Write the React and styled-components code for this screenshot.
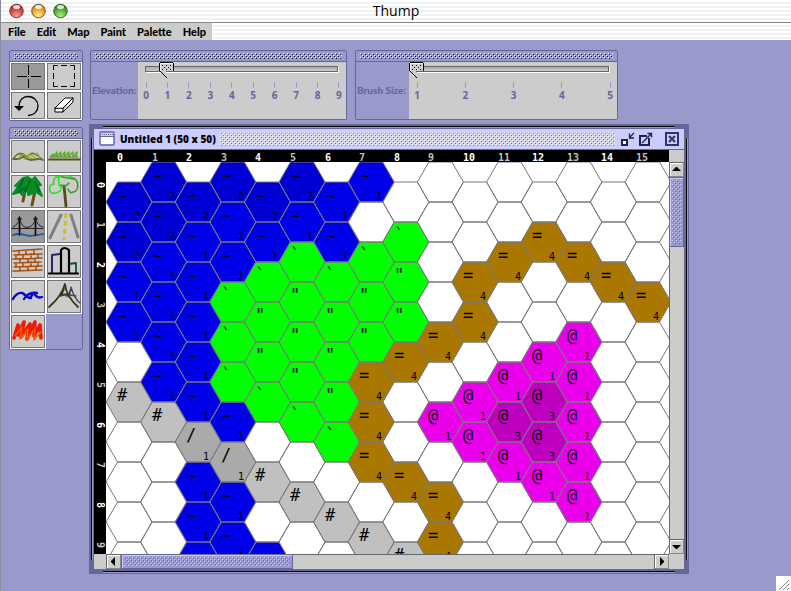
import React, { useState } from "react";
import styled, { createGlobalStyle, css } from "styled-components";

const lavender = "#9999cc";
const slate = "#666699";
const pale = "#ccccff";
const silver = "#cccccc";

const svgUrl = (w, h, body) =>
  `url("data:image/svg+xml,${encodeURIComponent(
    `<svg xmlns="http://www.w3.org/2000/svg" width="${w}" height="${h}" shape-rendering="crispEdges">${body}</svg>`
  )}")`;

const bumps = (light, dark) =>
  svgUrl(
    4,
    4,
    `<path fill="${light}" d="M0 0h1v1h-1zM2 2h1v1h-1z"/><path fill="${dark}" d="M1 1h1v1h-1zM3 3h1v1h-1z"/>`
  );

const thumbImage = svgUrl(
  15,
  16,
  `<path fill="#ccc" d="M1 1h13v8h-7v6l-6-6z"/><path fill="#fff" d="M1 1h13v1h-12v7h-1z"/>` +
    `<path fill="#000" d="M1 0h13v1h-13zM0 1h1v8h-1zM14 1h1v8h-1zM1 9h1v1h-1zM2 10h1v1h-1zM3 11h1v1h-1zM4 12h1v1h-1zM5 13h1v1h-1zM6 14h1v1h-1zM7 15h1v1h-1z"/>` +
    `<path fill="#000" d="M3 3h1v1h-1zM7 3h1v1h-1zM11 3h1v1h-1zM5 5h1v1h-1zM9 5h1v1h-1zM3 7h1v1h-1zM7 7h1v1h-1zM11 7h1v1h-1z"/>`
);

const Global = createGlobalStyle`
  * { box-sizing: border-box; }
  body { margin: 0; background: ${lavender}; font-family: "Open Sans", "Noto Sans", sans-serif; }
  button { padding: 0; border: 0; background: none; font: inherit; }
`;

const Screen = styled.div`
  min-height: 100vh;
  display: flex;
  flex-direction: column;
  position: relative;
  overflow: hidden;
  background: ${lavender};
  border-left: 1px solid #8a8a9a;
`;

const stripes = css`
  background: repeating-linear-gradient(#ffffff 0 2px, #f2f2f2 2px 4px);
`;

const TitleBar = styled.header`
  ${stripes}
  height: 23px;
  border-bottom: 1px solid #888;
  display: grid;
  grid-template-columns: 1fr auto 1fr;
  align-items: center;
`;

const Lights = styled.div`
  display: flex;
  gap: 7px;
  padding-left: 8px;
`;

const LightButton = styled.button`
  width: 15px;
  height: 16px;
  svg { display: block; }
`;

const AppTitle = styled.h1`
  margin: 0;
  font: 400 14px/22px "Open Sans", sans-serif;
  color: #000;
`;

const MenuStrip = styled.div`
  ${stripes}
  height: 17px;
  display: flex;
`;

const MenuBar = styled.nav`
  display: flex;
  gap: 11px;
  padding: 0 6px 0 7px;
  background: ${silver};
`;

const MenuItem = styled.button`
  font-family: Lato, sans-serif;
  font-size: 11px;
  line-height: 16px;
  font-weight: 900;
  color: #000;
`;

const Desktop = styled.main`
  flex: 1;
  display: grid;
  grid-template-columns: 74px 1fr;
  padding: 10px 102px 17px 8px;
  column-gap: 6px;
`;

const Sidebar = styled.aside`
  display: flex;
  flex-direction: column;
  gap: 6px;
`;

const Panel = styled.section`
  border: 1px solid ${slate};
  border-radius: 2px;
  flex: ${(p) => (p.$basis ? `0 1 ${p.$basis}px` : "none")};
  min-width: 0;
`;

const Grip = styled.div`
  height: 11px;
  border-bottom: 1px solid ${slate};
  padding: 2px 4px;
  &::before {
    content: "";
    display: block;
    height: 6px;
    background: ${bumps("#ffffff", "#111133")};
  }
`;

const ToolGrid = styled.div`
  display: grid;
  grid-template-columns: 36px 36px;
  grid-auto-rows: ${(p) => p.$row}px;
`;

const ToolButton = styled.button`
  background: ${(p) => (p.$on ? "#999999" : silver)};
  box-shadow: inset 1px 1px #fff, inset -1px -1px #fff, inset 2px 2px #777, inset -2px -2px #777;
  svg { display: block; }
`;

const Work = styled.div`
  display: flex;
  flex-direction: column;
  gap: 4px;
  min-width: 0;
`;

const ToolbarRow = styled.div`
  display: flex;
  gap: 8px;
  padding-left: 1px;
`;

const SliderRow = styled.div`
  display: flex;
  height: 57px;
`;

const SliderLabel = styled.label`
  width: ${(p) => p.$w}px;
  padding-left: 1px;
  font-family: Lato, sans-serif;
  font-size: 10px;
  line-height: 57px;
  font-weight: 900;
  color: ${slate};
  white-space: nowrap;
`;

const SliderBody = styled.div`
  flex: 1;
  background: ${silver};
`;

const Range = styled.input`
  appearance: none;
  display: block;
  width: 100%;
  height: 16px;
  margin: 0;
  background:
    linear-gradient(#aaaaaa, ${silver}) 8px 5px / calc(100% - 17px) 4px no-repeat,
    linear-gradient(#666, #666) 7px 4px / calc(100% - 15px) 6px no-repeat,
    linear-gradient(#fff, #fff) 8px 5px / calc(100% - 15px) 6px no-repeat;
  &::-webkit-slider-thumb {
    appearance: none;
    width: 15px;
    height: 16px;
    background: ${thumbImage};
  }
`;

const Scale = styled.div`
  display: flex;
  justify-content: space-between;
  padding: 4px 1px 0 2px;
`;

const Mark = styled.span`
  width: 12px;
  font-size: 10px;
  line-height: 14px;
  font-weight: 700;
  text-align: center;
  color: ${slate};
  &::before {
    content: "";
    display: block;
    width: 1px;
    height: 6px;
    margin: 0 auto;
    background: ${lavender};
  }
`;

const Frame = styled.section`
  flex: 1;
  position: relative;
  display: flex;
  flex-direction: column;
  border: 5px solid ${slate};
  border-radius: 1px;
`;

const Edge = styled.i`
  position: absolute;
  ${(p) =>
    p.$vertical
      ? css`width: 2px; top: 9px; bottom: 9px; border-left: 1px solid #000; border-right: 1px solid ${lavender};`
      : css`height: 2px; left: 9px; right: 9px; border-top: 1px solid #000; border-bottom: 1px solid ${lavender};`}
  ${(p) => p.$side}: ${(p) => p.$at}px;
`;

const FrameTitle = styled.div`
  height: 21px;
  display: flex;
  align-items: center;
  padding: 0 5px;
  background: ${pale};
  border-bottom: 1px solid ${slate};
  svg { display: block; }
`;

const FrameName = styled.h2`
  margin: 0 4px 0 5px;
  font-size: 10px;
  line-height: 20px;
  font-weight: 800;
  white-space: nowrap;
`;

const TitleBumps = styled.div`
  flex: 1;
  height: 14px;
  background: ${bumps("#ffffff", "#7777aa")};
`;

const FrameButtons = styled.div`
  display: flex;
  gap: 4px;
  margin-left: 6px;
  button:last-child { margin-left: 8px; }
`;

const Viewer = styled.div`
  flex: 1;
  display: grid;
  grid-template-columns: 12px 1fr 15px;
  grid-template-rows: 12px 1fr 15px;
  background: ${silver};
`;

const MapPane = styled.div`
  grid-area: 1 / 1 / 3 / 3;
  min-height: 404px;
  overflow: hidden;
  svg { display: block; width: 100%; height: 100%; }
`;

const ScrollBar = styled.div`
  grid-area: ${(p) => (p.$vertical ? "2 / 3" : "3 / 2")};
  display: flex;
  flex-direction: ${(p) => (p.$vertical ? "column" : "row")};
  background: ${silver};
  box-shadow: inset ${(p) => (p.$vertical ? "1px 0" : "0 1px")} #666;
`;

const ArrowButton = styled.button`
  flex: none;
  width: 15px;
  height: 15px;
  background: ${silver};
  box-shadow: inset 1px 1px #666, inset -1px -1px #888, inset 2px 2px #fff;
  svg { display: block; }
`;

const Thumb = styled.div`
  flex: 0 0 ${(p) => p.$size}px;
  padding: 3px;
  background: ${lavender};
  box-shadow: inset 0 0 0 1px ${slate}, inset 2px 2px ${pale};
  &::before {
    content: "";
    display: block;
    height: 100%;
    background: ${bumps(pale, slate)};
  }
`;

const Spacer = styled.div`
  flex: 1;
`;

const SizeHandle = styled.div`
  position: absolute;
  right: 0;
  bottom: 0;
  svg { display: block; }
`;

const Glyph = styled.text`
  font-size: 17px;
`;

const WaterGlyph = styled.text`
  font-family: "Noto Sans", sans-serif;
  font-size: 18px;
`;

/* Terrain code: symbol, fill, elevation */
const terrain = {
  w: ["~", "#0000e9", "1"],
  W: ["~", "#0000d4", "2"],
  g: ["`", "#00ff00", ""],
  G: ['"', "#00ff00", ""],
  r: ["=", "#aa7700", "4"],
  p: ["#", "#c0c0c0", ""],
  b: ["/", "#aaaaaa", "1"],
  m: ["@", "#ea00ea", "1"],
  M: ["@", "#c000c0", "3"],
};

const columns = [
  "WWww.p....",
  "WWwwwwp...",
  "Wwwwwwbwww",
  "Wwwgggwbww",
  "WwgGGg.p.w",
  "WwgGGGg.p.",
  "wwgGGGg.p.",
  "w.gGGrrr.p",
  ".gGGr..r.p",
  "....r.m.rr",
  "..rr.mm...",
  "..r..mMm..",
  ".r..mMMm..",
  "..r.mmmmm.",
  "..r.......",
  "...r......",
];

const HEX_STEP = 34.6;
const hexPath = (cx, top) =>
  `M${cx - 23} ${top + 20}L${cx - 11.5} ${top}H${cx + 11.5}L${cx + 23} ${top + 20}L${cx + 11.5} ${top + 40}H${cx - 11.5}Z`;

function HexMap() {
  const cells = columns.flatMap((col, c) =>
    [...col].map((code, r) => ({
      key: `${c}-${r}`,
      cx: 35 + c * HEX_STEP,
      top: (c % 2 ? 12 : 32) + r * 40,
      kind: terrain[code],
    }))
  );
  const filled = cells.filter((h) => h.kind);
  return (
    <svg role="img" aria-label="Hex map" fontFamily='"DejaVu Sans Mono", monospace'>
      <rect width="100%" height="100%" fill="#000" />
      <svg x="12" y="12" width="100%" height="100%">
        <rect width="100%" height="100%" fill="#fff" />
        <g transform="translate(-12 -12)">
          {filled.map((h) => (
            <path key={h.key} d={hexPath(h.cx, h.top)} fill={h.kind[1]} />
          ))}
          {cells.map((h) => (
            <path key={h.key} d={hexPath(h.cx, h.top)} fill="none" stroke="#787878" />
          ))}
          {filled.map((h) => (
            <g key={h.key}>
              {h.kind[0] === "~" ? (
                <WaterGlyph x={Math.round(h.cx - 12)} y={h.top + 21}>~</WaterGlyph>
              ) : (
                <Glyph x={Math.round(h.cx - 12)} y={h.top + 19}>{h.kind[0]}</Glyph>
              )}
              {h.kind[2] && <text x={Math.round(h.cx + 5)} y={h.top + 38} fontSize="10">{h.kind[2]}</text>}
            </g>
          ))}
        </g>
      </svg>
      <g fontSize="10" fontWeight="700">
        {columns.map((_, c) => (
          <text key={c} x={Math.round(23 + c * HEX_STEP)} y="11" fill={c % 2 ? "#c0c0c0" : "#fff"}>{c}</text>
        ))}
        {[0, 1, 2, 3, 4, 5, 6, 7, 8, 9].map((r) => (
          <text key={r} transform={`translate(3 ${32 + r * 40}) rotate(90)`} fill={r % 2 ? "#c0c0c0" : "#fff"}>{r}</text>
        ))}
      </g>
    </svg>
  );
}

const Icon = ({ h = 35, children }) => (
  <svg width="36" height={h} viewBox={`0 0 36 ${h}`} fill="none" strokeLinecap="round" strokeLinejoin="round">
    {children}
  </svg>
);

const editTools = [
  ["Crosshair", <path d="M7 14.5h10M21 14.5h10M18.5 3v10M18.5 17v9M18 14.5h1" stroke="#000" strokeLinecap="butt" />],
  ["Select", <path d="M7.5 8V3.5H12M15 3.5h6M24 3.5h4.5V8M28.5 11v6M28.5 20v4.5H24M21 24.5h-6M12 24.5H7.5V20M7.5 17v-6" stroke="#000" strokeLinecap="butt" strokeLinejoin="miter" />],
  ["Undo", <><path d="M9 15C9 9 13 5.5 18 5.5C24 5.5 28 10 28 15C28 20 24 24.5 18.5 24.5" stroke="#000" strokeWidth="1.3" /><path d="M4 15h10l-5 5z" fill="#000" /></>],
  ["Eraser", <path d="M9 17L19 7L27 7L17 17ZM9 17V21H17V17M17 21L27 11V7" fill="#fff" stroke="#000" />],
];

const terrainTools = [
  ["Rough", <><path d="M3 20h6l4-2 7 3 9-1 4 1" stroke="#665d50" strokeWidth="1.8" /><path d="M4 19Q8 13 12 15L16 20Q20 12 25 15L32 20M8 15Q13 13 17 18" stroke="#6c6a24" strokeWidth="1.4" /><path d="M8 20Q12 13 17 17T25 19M15 20Q20 12 25 19M27 14l3 5" stroke="#8fae1c" strokeWidth="1.4" /></>],
  ["Grass", <><path d="M5 18h27M4 18l3-3v3l4-5-1 5 5-5-1 5 5-5-1 5 5-5-1 5 5-5 0 5 4-5-1 5" stroke="#5da832" strokeWidth="1.4" /><path d="M3 20.5h31" stroke="#5b5020" strokeWidth="1.8" /></>],
  ["Woods", <><path d="M15 17L13 27M25 17L22 31" stroke="#6a4e16" strokeWidth="3" /><path d="M13 4L5 12l4-1-6 9 7-2 2 3 6-5 0 5 8-3 6 4-4-10 3-1-6-8-3 3-4-3z" fill="#078c28" stroke="#078c28" strokeWidth="2" /><path d="M13 6l-4 8M20 7l-5 10M25 8l4 9M9 18l5-4" stroke="#006c25" strokeWidth="2" /></>],
  ["Jungle", <><path d="M18 12L20 32" stroke="#584a1c" strokeWidth="2.8" /><path d="M12 3C8 2 7 8 8 10C3 10 2 17 6 19C10 20 13 18 15 16M12 3C18 1 24 1 26 4M13 3C12 8 12 11 15 14" stroke="#25e018" strokeWidth="1.5" /><path d="M26 4C34 5 33 18 27 18C24 20 23 17 22 15M15 11q4 3 8-2M16 3l12 2" stroke="#3a9b20" strokeWidth="1.6" /></>],
  ["Bridge", <><path d="M3 26q6-2 12 0t18-1" stroke="#1554a8" strokeWidth="1.8" /><path d="M9.5 8v18M25.5 8v18M8 10h3M24 10h3" stroke="#000" strokeWidth="1.6" /><path d="M2 19.5h31M3 18Q8 16 9.5 9Q11 18 17 18.5Q24 18 25.5 9Q27 17 33 18" stroke="#222" /></>],
  ["Road", <><path d="M15 6L4 29M25 6L32 28" stroke="#808080" strokeWidth="3" /><path d="M20 4L18 31" stroke="#cbc021" strokeWidth="3" strokeDasharray="5 3" strokeLinecap="butt" /></>],
  ["Rubble", <path d="M3 7l14-1 15-1M4 11l28-1M3 15l29-1M4 19l27-1M4 23l28-1M3 27l29-1M9 7v4M16 7v3M24 6v4M6 11v4M13 11v3M21 10v4M28 10v4M10 15v4M18 15v3M25 14v4M6 19v4M13 19v3M21 18v4M28 18v4M10 23v4M18 23v3M26 22v4" stroke="#a65012" strokeWidth="1.5" />],
  ["Building", <><path d="M6 29V11l8-1" stroke="#24246c" strokeWidth="2" /><path d="M23 20l7-1v10" stroke="#16502e" strokeWidth="1.8" /><path d="M3 29.5h29M15 29V6Q18 2 23 6V29" stroke="#000" strokeWidth="2.2" /></>],
  ["Water", <path d="M3 20Q7 13 12 14C15 15 17 19 21 19Q21 14 27 14C22 13 17 15 14 20M24 14Q27 20 32 18" stroke="#0909c4" strokeWidth="2.4" />],
  ["Mountain", <><path d="M20 17Q25 16 25 8Q28 19 34 24M25 9L22 18M24 16l6 1" stroke="#42454b" strokeWidth="1.3" /><path d="M3 28Q15 18 19 5Q20 17 32 28M18 10l-3 7M16 16l7-1" stroke="#39371e" strokeWidth="1.8" /></>],
  ["Fire", <><path d="M4 24L8 11 8 21 14 8 11 23 20 10 17 25 25 8 24 22 30 11 31 24" stroke="#f01806" strokeWidth="3.6" /><path d="M5 22l7-9-2 12 8-10-1 10 8-10-1 11 7-8" stroke="#f85a00" strokeWidth="1.5" /></>],
];

function Tools({ items, row, initial, label }) {
  const [active, setActive] = useState(initial);
  return (
    <Panel aria-label={label}>
      <Grip />
      <ToolGrid $row={row}>
        {items.map(([name, art]) => (
          <ToolButton key={name} aria-label={name} $on={name === active} onClick={() => setActive(name)}>
            <Icon h={row}>{art}</Icon>
          </ToolButton>
        ))}
      </ToolGrid>
    </Panel>
  );
}

function SliderPanel({ id, label, labelWidth, basis, min, max, initial }) {
  const marks = Array.from({ length: max - min + 1 }, (_, i) => min + i);
  return (
    <Panel $basis={basis}>
      <Grip />
      <SliderRow>
        <SliderLabel htmlFor={id} $w={labelWidth}>{label}</SliderLabel>
        <SliderBody>
          <Range id={id} type="range" min={min} max={max} defaultValue={initial} />
          <Scale>
            {marks.map((m) => <Mark key={m}>{m}</Mark>)}
          </Scale>
        </SliderBody>
      </SliderRow>
    </Panel>
  );
}

function Light({ name, deep, bright }) {
  return (
    <LightButton aria-label={name}>
      <svg width="15" height="16" viewBox="0 0 15 16">
        <defs>
          <radialGradient id={name} cx=".5" cy=".85" r=".75">
            <stop offset="0" stopColor={bright} />
            <stop offset="1" stopColor={deep} />
          </radialGradient>
        </defs>
        <circle cx="7.5" cy="8" r="6.8" fill={`url(#${name})`} stroke="#333" strokeOpacity=".75" />
        <ellipse cx="7.5" cy="4" rx="3.5" ry="2" fill="#fff" opacity=".8" />
      </svg>
    </LightButton>
  );
}

const Arrow = ({ label, d }) => (
  <ArrowButton aria-label={label}>
    <svg width="15" height="15"><path d={d} fill="#000" /></svg>
  </ArrowButton>
);

export default function App() {
  return (
    <Screen>
      <Global />
      <TitleBar>
        <Lights>
          <Light name="Close" deep="#b8221c" bright="#ff9a90" />
          <Light name="Minimise" deep="#e07a10" bright="#fff37a" />
          <Light name="Zoom" deep="#24861a" bright="#a8f57a" />
        </Lights>
        <AppTitle>Thump</AppTitle>
      </TitleBar>
      <MenuStrip>
        <MenuBar>
          {["File", "Edit", "Map", "Paint", "Palette", "Help"].map((m) => <MenuItem key={m}>{m}</MenuItem>)}
        </MenuBar>
      </MenuStrip>
      <Desktop>
        <Sidebar>
          <Tools label="Edit tools" items={editTools} row={29} initial="Crosshair" />
          <Tools label="Terrain" items={terrainTools} row={35} initial="Bridge" />
        </Sidebar>
        <Work>
          <ToolbarRow>
            <SliderPanel id="elevation" label="Elevation:" labelWidth={47} basis={257} min={0} max={9} initial={1} />
            <SliderPanel id="brush" label="Brush Size:" labelWidth={53} basis={263} min={1} max={5} initial={1} />
          </ToolbarRow>
          <Frame>
            <Edge $side="top" $at={-3} />
            <Edge $side="bottom" $at={-4} />
            <Edge $vertical $side="left" $at={-3} />
            <Edge $vertical $side="right" $at={-4} />
            <FrameTitle>
              <svg width="16" height="16">
                <rect x="1" y="1" width="14" height="13" rx="1" fill="#fff" stroke={slate} strokeWidth="1.5" />
                <path d="M2 2h12v3H2z" fill={pale} />
                <path d="M3 3.5h11" stroke={slate} strokeDasharray="1 1" />
                <path d="M1 5.5h14" stroke={slate} />
              </svg>
              <FrameName>Untitled 1 (50 x 50)</FrameName>
              <TitleBumps />
              <FrameButtons>
                <button aria-label="Iconify">
                  <svg width="14" height="14" fill="none" stroke="#224">
                    <path d="M1 8h5v5H1z" strokeWidth="2" fill="#fff" />
                    <path d="M13 1L8.5 5.5M8.5 1.5v4.5H13" strokeWidth="1.3" />
                  </svg>
                </button>
                <button aria-label="Maximise">
                  <svg width="14" height="14" fill="none" stroke="#224">
                    <path d="M8 4H1v9h9V6" strokeWidth="2" />
                    <path d="M3 11l9.5-9.5M8.5 1.5h4V5.5" strokeWidth="1.4" />
                  </svg>
                </button>
                <button aria-label="Close window">
                  <svg width="14" height="14" fill="none" stroke="#336">
                    <rect x="1" y="1" width="12" height="12" strokeWidth="2" />
                    <path d="M4 4l6 6M10 4l-6 6" strokeWidth="2" />
                  </svg>
                </button>
              </FrameButtons>
            </FrameTitle>
            <Viewer>
              <MapPane><HexMap /></MapPane>
              <ScrollBar $vertical>
                <Arrow label="Up" d="M7 5h1l4 4H3z" />
                <Thumb $size={70} />
                <Spacer />
                <Arrow label="Down" d="M3 6h9l-4 4H7z" />
              </ScrollBar>
              <ScrollBar>
                <Arrow label="Left" d="M9 3v9L5 8V7z" />
                <Thumb $size={172} />
                <Spacer />
                <Arrow label="Right" d="M6 3v9l4-4V7z" />
              </ScrollBar>
            </Viewer>
          </Frame>
        </Work>
      </Desktop>
      <SizeHandle>
        <svg width="15" height="15">
          <path d="M0 0h15v15H0z" fill="#fff" />
          <path d="M3 14L13 4M7 14l6-6M11 14l2-2" stroke="#888" />
        </svg>
      </SizeHandle>
    </Screen>
  );
}
